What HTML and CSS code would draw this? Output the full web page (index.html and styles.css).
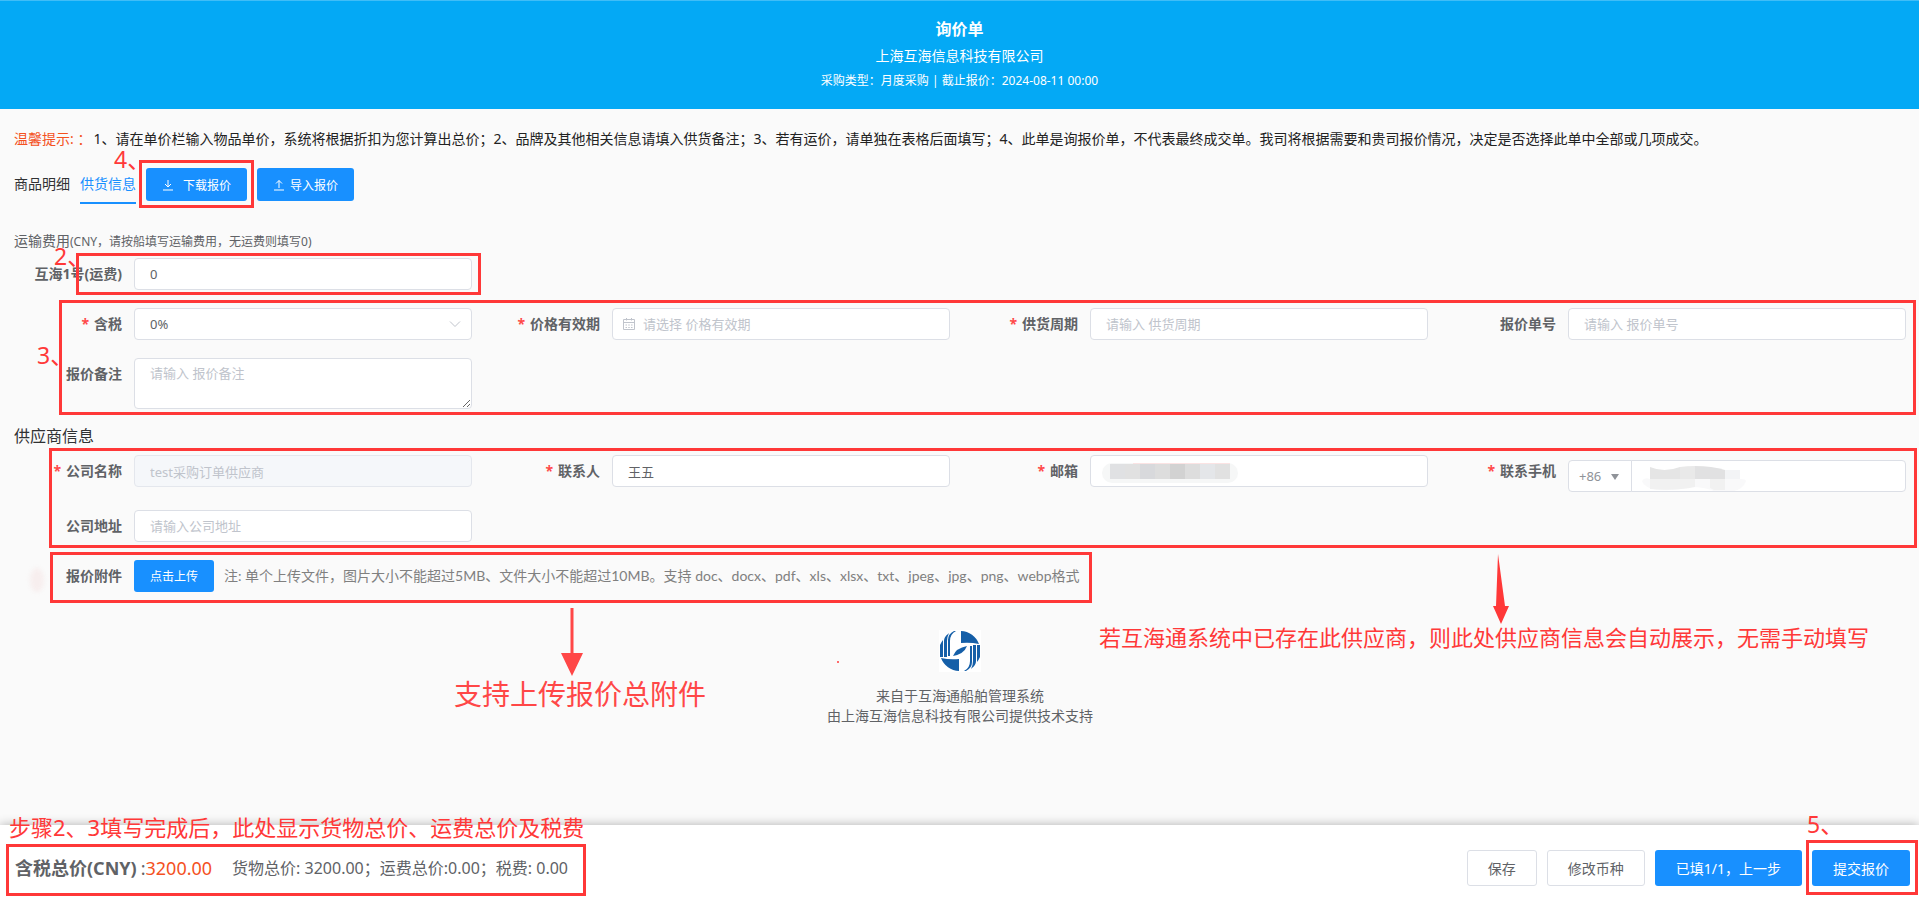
FILE: index.html
```html
<!DOCTYPE html>
<html lang="zh-CN">
<head>
<meta charset="utf-8">
<meta name="viewport" content="width=device-width, initial-scale=1">
<title>询价单</title>
<link rel="stylesheet" href="styles.css">
</head>
<body>
<header class="page-header">
  <h1 class="page-title">询价单</h1>
  <p class="company">上海互海信息科技有限公司</p>
  <p class="meta">采购类型：月度采购 | 截止报价：2024-08-11 00:00</p>
</header>

<main class="content">
  <p class="tip"><span class="tip-label">温馨提示: ：</span>1、请在单价栏输入物品单价，系统将根据折扣为您计算出总价；2、品牌及其他相关信息请填入供货备注；3、若有运价，请单独在表格后面填写；4、此单是询报价单，不代表最终成交单。我司将根据需要和贵司报价情况，决定是否选择此单中全部或几项成交。</p>

  <nav class="toolbar">
    <a class="tab" href="#goods">商品明细</a>
    <a class="tab tab-active" href="#supply">供货信息</a>
    <div class="marked">
      <button class="btn btn-primary btn-small btn-download" type="button">
        <svg class="btn-icon" viewBox="0 0 12 12" aria-hidden="true"><path d="M6 1v7M3 5l3 3 3-3M1 11h10"/></svg>下载报价
      </button>
      <span class="mark mark-download"></span>
      <span class="step step-4">4、</span>
    </div>
    <button class="btn btn-primary btn-small btn-import" type="button">
      <svg class="btn-icon" viewBox="0 0 12 12" aria-hidden="true"><path d="M6 9V1.500M3 4.500l3-3 3 3M1 11h10"/></svg>导入报价
    </button>
  </nav>

  <form id="quote">
    <h2 class="freight-title">运输费用<small>(CNY，请按船填写运输费用，无运费则填写0)</small></h2>
    <section class="grid freight">
      <div class="field marked">
        <label class="label" for="freight">互海1号(运费)</label>
        <div class="control"><input class="input" id="freight" type="text" value="0"></div>
        <span class="mark mark-freight"></span>
        <span class="step step-2">2、</span>
      </div>
    </section>

    <section class="grid supply marked" id="supply">
      <div class="field">
        <label class="label required" for="tax">含税</label>
        <div class="control">
          <select class="input" id="tax"><option>0%</option></select>
          <svg class="chevron" viewBox="0 0 12 12" aria-hidden="true"><path d="M1 3.500l5 5 5-5"/></svg>
        </div>
      </div>
      <div class="field">
        <label class="label required" for="valid">价格有效期</label>
        <div class="control">
          <svg class="calendar" viewBox="0 0 14 14" aria-hidden="true"><path d="M1.500 2.500h11v10h-11zM1.500 5.500h11M4.500 1v2.500M9.500 1v2.500M3.500 8h1.500M6.250 8h1.500M9 8h1.500M3.500 10.500h1.500M6.250 10.500h1.500M9 10.500h1.500"/></svg>
          <input class="input input-date" id="valid" type="text" placeholder="请选择 价格有效期">
        </div>
      </div>
      <div class="field">
        <label class="label required" for="cycle">供货周期</label>
        <div class="control"><input class="input" id="cycle" type="text" placeholder="请输入 供货周期"></div>
      </div>
      <div class="field">
        <label class="label" for="quote-no">报价单号</label>
        <div class="control"><input class="input" id="quote-no" type="text" placeholder="请输入 报价单号"></div>
      </div>
      <div class="field">
        <label class="label" for="remark">报价备注</label>
        <div class="control"><textarea class="input textarea" id="remark" placeholder="请输入 报价备注"></textarea></div>
      </div>
      <span class="mark mark-supply"></span>
      <span class="step step-3">3、</span>
    </section>

    <h2 class="supplier-title">供应商信息</h2>
    <section class="grid supplier marked">
      <div class="field">
        <label class="label required" for="company">公司名称</label>
        <div class="control"><input class="input" id="company" type="text" value="test采购订单供应商" disabled></div>
      </div>
      <div class="field">
        <label class="label required" for="contact">联系人</label>
        <div class="control"><input class="input" id="contact" type="text" value="王五"></div>
      </div>
      <div class="field">
        <label class="label required" for="email">邮箱</label>
        <div class="control">
          <input class="input" id="email" type="email">
          <svg class="mosaic mosaic-email" viewBox="0 0 136 20" aria-hidden="true">
            <rect width="136" height="20" rx="10" fill="#f6f7f7"/>
            <path fill="#fbe3e3" d="M31 0h97v1H31z"/>
            <path fill="#e0e1e3" d="M8 1h15v15H8z"/>
            <path fill="#e1e1e1" d="M23 1h15v15H23zM113 1h15v15h-15z"/>
            <path fill="#d8d9dc" d="M38 1h15v15H38z"/>
            <path fill="#dddddd" d="M53 1h15v15H53zM83 1h15v15H83z"/>
            <path fill="#d2d2d2" d="M68 1h15v15H68z"/>
            <path fill="#e4e6e9" d="M98 1h15v15H98z"/>
          </svg>
        </div>
      </div>
      <div class="field">
        <label class="label required" for="phone">联系手机</label>
        <div class="control phone">
          <select class="area-code" aria-label="区号"><option>+86</option></select>
          <svg class="caret" viewBox="0 0 8 6" aria-hidden="true"><path d="M0 0h8L4 6z"/></svg>
          <input class="input phone-input" id="phone" type="tel">
          <svg class="mosaic mosaic-phone" viewBox="0 0 104 25" aria-hidden="true">
            <path fill="#f9f9fa" d="M8 13h90q6 0 6 2-3 8-12 10H72q-10-4-22-4-16 4-34 3Q2 22 0 15q2-4 8-2z"/>
            <path fill="#e5e5e5" d="M8 1q14 6 30 0v12H8z"/>
            <path fill="#e9e9e9" d="M38 1q7-1 15-1v13H38z"/>
            <path fill="#e1e1e2" d="M53 0q17 0 30 4v9H53z"/>
            <path fill="#f3f4f6" d="M83 4h15v9H83z"/>
            <path fill="#f1f1f1" d="M8 13h45v8q-20 4-45 2zM68 13h15v11H72l-4-2z"/>
          </svg>
        </div>
      </div>
      <div class="field">
        <label class="label" for="address">公司地址</label>
        <div class="control"><input class="input" id="address" type="text" placeholder="请输入公司地址"></div>
      </div>
      <span class="mark mark-supplier"></span>
      <svg class="arrow-supplier" viewBox="0 0 16 70" aria-hidden="true"><path d="M5 0L12 52h4L8 70 0 52h3z"/></svg>
      <span class="note note-supplier">若互海通系统中已存在此供应商，则此处供应商信息会自动展示，无需手动填写</span>
    </section>

    <section class="attachment marked">
      <span class="label" id="attach-label">报价附件</span>
      <button class="btn btn-primary btn-upload" type="button" aria-describedby="attach-label">点击上传</button>
      <span class="upload-hint">注: 单个上传文件，图片大小不能超过5MB、文件大小不能超过10MB。支持 doc、docx、pdf、xls、xlsx、txt、jpeg、jpg、png、webp格式</span>
      <span class="mark mark-attachment"></span>
      <span class="smudge"></span>
      <svg class="arrow-attachment" viewBox="0 0 22 68" aria-hidden="true"><path d="M9.500 0h3v45H22L11 68 0 45h9.500z"/></svg>
      <span class="note note-attachment">支持上传报价总附件</span>
    </section>
  </form>

  <footer class="credit">
    <svg class="logo" viewBox="0 0 42 42" role="img" aria-label="互海通">
      <defs>
        <g id="logo-half">
          <path d="M22 1a20 20 0 0 1 18 13q-9-2-18-1z"/>
          <path d="M1 27V15a20 20 0 0 1 3-5v17zM5 27V11q0-4 4-7l1-1q-2 4-2 8v16zM9 26V10q0-6 6-9h2q-6 3-6 10v15z"/>
        </g>
      </defs>
      <path fill="#fff" d="M0 0h42v42H0z"/>
      <g fill="#155fa8">
        <use href="#logo-half"/>
        <use href="#logo-half" transform="rotate(180 21 21)"/>
        <path d="M14 26q3-8 14-10-3 8-14 10z"/>
      </g>
    </svg>
    <p>来自于互海通船舶管理系统</p>
    <p>由上海互海信息科技有限公司提供技术支持</p>
    <span class="speck"></span>
  </footer>
</main>

<div class="action-bar">
  <div class="totals marked">
    <strong class="total-label">含税总价(CNY)</strong><span class="total-colon">:</span><span class="total-value">3200.00</span>
    <span class="total-detail">货物总价: 3200.00；运费总价:0.00；税费: 0.00</span>
    <span class="mark mark-totals"></span>
    <span class="note note-totals">步骤2、3填写完成后，此处显示货物总价、运费总价及税费</span>
  </div>
  <div class="actions">
    <button class="btn btn-plain" type="button">保存</button>
    <button class="btn btn-plain" type="button">修改币种</button>
    <button class="btn btn-primary" type="button">已填1/1，上一步</button>
    <div class="marked">
      <button class="btn btn-primary" type="submit" form="quote">提交报价</button>
      <span class="mark mark-submit"></span>
      <span class="step step-5">5、</span>
    </div>
  </div>
</div>
</body>
</html>
```

FILE: styles.css
```css
* { box-sizing: border-box; }

body {
  margin: 0;
  min-height: 100vh;
  display: flex;
  flex-direction: column;
  background: #fafafa;
  color: #303133;
  font: 14px/20px "Noto Sans", "Noto Sans CJK SC", sans-serif;
  overflow-x: hidden;
}

h1, h2, p { margin: 0; }
button, input, select, textarea { font-family: inherit; }

/* Header */
.page-header {
  padding: 16px 14px 18px;
  border-top: 1px solid #40bdf7;
  background: #04a9f5;
  color: #fff;
  text-align: center;
}
.page-title { font-size: 16px; line-height: 24px; font-weight: 700; }
.company { margin-top: 5px; }
.meta { margin-top: 5px; font-size: 12px; }

/* Content */
.content { flex: 1; padding: 20px 13px 20px 14px; }
.tip { color: #222; }
.tip-label { margin-right: 2px; color: #f4511e; }

.toolbar {
  display: flex;
  align-items: flex-start;
  gap: 10px;
  margin-top: 19px;
}
.tab {
  padding-bottom: 2px;
  border-bottom: 2px solid transparent;
  color: #303133;
  line-height: 32px;
  text-decoration: none;
}
.tab-active { border-color: #1890ff; color: #1890ff; }

.btn {
  display: inline-flex;
  align-items: center;
  justify-content: center;
  height: 36px;
  padding: 0 20px;
  border: 1px solid transparent;
  border-radius: 3px;
  font-size: 14px;
  white-space: nowrap;
}
.btn-primary { background: #1890ff; color: #fff; }
.btn-plain { background: #fff; border-color: #dcdfe6; color: #606266; }
.btn-small { height: 33px; padding: 0 15px; font-size: 12px; }
.btn-upload { height: 32px; padding: 0 8px; width: 80px; font-size: 12px; }
.btn-download { gap: 9px; }
.btn-import { gap: 5px; }
.btn-icon { width: 12px; height: 12px; fill: none; stroke: #fff; stroke-width: 1; }

.freight-title {
  margin-top: 27px;
  color: #606266;
  font-size: 14px;
  line-height: 20px;
  font-weight: 400;
}
.freight-title small { font-size: 12px; }
.supplier-title {
  margin-top: 15px;
  color: #303133;
  font-size: 16px;
  line-height: 24px;
  font-weight: 400;
}

/* Form grid */
.grid {
  display: grid;
  grid-template-columns: repeat(4, minmax(0, 1fr));
  column-gap: 20px;
}
.freight { margin-top: 6px; }
.supply { margin-top: 18px; row-gap: 18px; }
.supplier { margin-top: 7px; row-gap: 18px; }

.field { display: flex; align-items: flex-start; }
.label {
  flex: none;
  width: 120px;
  padding-right: 12px;
  color: #606266;
  font-weight: 700;
  line-height: 32px;
  text-align: right;
  white-space: nowrap;
}
.required::before { content: "*"; margin-right: 5px; color: #ff4949; }

.control { position: relative; flex: 1; min-width: 0; display: flex; }
.input {
  width: 100%;
  height: 32px;
  padding: 0 15px;
  border: 1px solid #dcdfe6;
  border-radius: 4px;
  background: #fff;
  color: #606266;
  font-size: 13px;
  appearance: none;
}
.input::placeholder { color: #c0c4cc; opacity: 1; }
.input:disabled { background: #f5f7fa; border-color: #e4e7ed; color: #c0c4cc; }
.input-date { padding-left: 30px; }
.textarea { height: 51px; padding: 4px 15px; line-height: 20px; resize: vertical; }
.chevron {
  position: absolute;
  top: 10px;
  right: 11px;
  width: 12px;
  height: 12px;
  fill: none;
  stroke: #c0c4cc;
}
.calendar {
  position: absolute;
  top: 9px;
  left: 10px;
  width: 14px;
  height: 14px;
  fill: none;
  stroke: #c0c4cc;
}

.phone { margin-top: 5px; }
.area-code {
  flex: none;
  width: 64px;
  height: 32px;
  padding: 0 10px;
  border: 1px solid #dcdfe6;
  border-radius: 4px 0 0 4px;
  background: #fff;
  color: #909399;
  font-size: 13px;
  appearance: none;
}
.phone-input { margin-left: -1px; border-radius: 0 4px 4px 0; }
.caret { position: absolute; top: 14px; left: 43px; width: 8px; height: 6px; fill: #909399; }
.mosaic { position: absolute; }
.mosaic-email { top: 8px; left: 12px; width: 136px; height: 20px; }
.mosaic-phone { top: 6px; left: 74px; width: 104px; height: 25px; }

.attachment {
  display: flex;
  width: fit-content;
  margin-top: 18px;
}
.upload-hint {
  margin-left: 10px;
  color: #808080;
  font-family: Lato, "Noto Sans CJK SC", sans-serif;
  line-height: 32px;
}

/* Credit */
.credit { position: relative; margin-top: 38px; color: #606266; text-align: center; }
.logo { display: block; width: 42px; height: 42px; margin: 0 auto 14px; }
.speck {
  position: absolute;
  top: 31px;
  left: calc(50% - 123px);
  width: 2px;
  height: 2px;
  background: #ff6b6b;
}

/* Bottom bar */
.action-bar {
  position: sticky;
  bottom: 0;
  display: flex;
  align-items: center;
  justify-content: space-between;
  height: 86px;
  padding: 0 9px 0 15px;
  background: #fff;
  box-shadow: 0 0 10px rgba(0, 0, 0, .3);
}
.totals { display: flex; align-items: center; color: #606266; line-height: 24px; }
.total-label, .total-colon, .total-value { font-size: 18px; }
.total-label { margin-right: 4px; }
.total-value { margin-right: 20px; color: #f4511e; }
.total-detail { margin-right: 4px; font-size: 16px; }
.actions { display: flex; gap: 10px; }

/* Red call-outs drawn over the form */
.marked { position: relative; }
.mark { position: absolute; border: 3px solid #ff3838; pointer-events: none; }
.mark-download { inset: -8px -7px -7px; }
.mark-freight { inset: -5px -9px -5px 62px; }
.mark-supply { inset: -8px -10px -6px 45px; }
.mark-supplier { inset: -7px -11px -6px 35px; }
.mark-attachment { inset: -8px -12px -11px 36px; }
.mark-totals { inset: -12px -14px -16px -9px; }
.mark-submit { inset: -10px -8px -9px -6px; }

.step, .note {
  position: absolute;
  color: #ff3838;
  font-size: 22px;
  line-height: 28px;
  white-space: nowrap;
  pointer-events: none;
}
.step { font-size: 23px; }
.step-4 { top: -23px; left: -32px; }
.step-2 { top: -16px; left: 40px; }
.step-3 { top: 33px; left: 23px; }
.step-5 { top: -40px; left: -5px; }
.note-supplier { top: 168px; right: 37px; }
.note-attachment { top: 116px; left: 440px; font-size: 28px; line-height: 36px; color: #ff4747; }
.note-totals { top: -43px; left: -6px; }

.arrow-supplier { position: absolute; top: 99px; right: 397px; width: 16px; height: 70px; fill: #ff3838; }
.arrow-attachment { position: absolute; top: 48px; left: 547px; width: 22px; height: 68px; fill: #ff4747; }
.smudge {
  position: absolute;
  top: 8px;
  left: 16px;
  width: 14px;
  height: 24px;
  border-radius: 50%;
  background: #f7eeee;
  box-shadow: 10px 8px 0 -8px #f5b5b5;
  filter: blur(2px);
}
```
